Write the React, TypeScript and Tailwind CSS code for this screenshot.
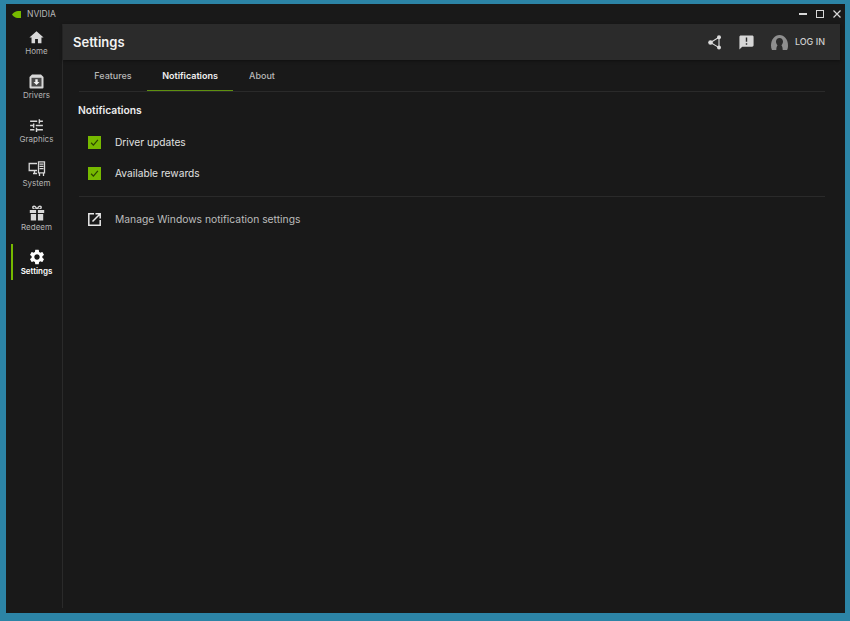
import { MdHome, MdTune, MdSettings, MdAnnouncement } from 'react-icons/md';
import type { ReactNode } from 'react';

const font = { fontFamily: 'Inter, "Noto Sans", sans-serif' };

function DriversIcon() {
  return (
    <svg width="15" height="15" viewBox="0 0 15 15" fill="#d8d8d8">
      <path d="M3 .5h9l2.500 2.500v10.500a1 1 0 0 1-1 1h-12a1 1 0 0 1-1-1V3z" />
      <path d="M2.500 3.800h10v8.700h-10z" fill="#4a4a4a" />
      <path d="M6.300 5.300h2.400v2.600h1.800l-3 3-3-3h1.800z" fill="#f0f0f0" />
    </svg>
  );
}

function SystemIcon() {
  return (
    <svg width="18" height="16" viewBox="0 0 18 16" fill="none" stroke="#d8d8d8" strokeWidth="1.3">
      <path d="M9 9.500H1.200V2.500H9" />
      <path d="M5 12.500h4M6.500 9.500v3" />
      <path d="M10.500 .8h6v11h-6z" fill="#191919" />
      <path d="M11.500 3.200h4M11.500 5.400h4M11.500 7.600h4M11.500 12v3M15.500 12v3" />
    </svg>
  );
}

function RedeemIcon() {
  return (
    <svg width="16" height="16" viewBox="0 0 16 16" fill="#d8d8d8">
      <path
        fillRule="evenodd"
        d="M5 .6c1.400 0 2.400 1 3 2.400.6-1.400 1.600-2.400 3-2.400 1.100 0 1.900.8 1.900 1.700 0 .7-.3 1.200-.7 1.700H3.800c-.4-.5-.7-1-.7-1.700C3.100 1.400 3.900.6 5 .6zm0 1.400c-.6 0-.6.9 0 1.200.6.200 1.400.3 1.800.3C6.400 2.700 5.700 2 5 2zm6 0c-.7 0-1.400.700-1.800 1.500.4 0 1.200-.1 1.800-.3.6-.3.6-1.200 0-1.200z"
      />
      <path d="M.8 5h6.300v3H.8zM8.900 5h6.300v3H8.900zM1.800 9h5.300v6.500H1.800zM8.900 9h5.300v6.500H8.900z" />
    </svg>
  );
}

function ShareIcon() {
  return (
    <svg width="14" height="15" viewBox="0 0 14 15" fill="#dcdcdc" stroke="#dcdcdc">
      <path d="M11 2.200 2.500 7.500 11 12.600z" fill="none" strokeWidth="1.100" />
      <circle cx="11" cy="2.200" r="2" strokeWidth="0" />
      <circle cx="2.500" cy="7.500" r="2.300" strokeWidth="0" />
      <circle cx="11" cy="12.600" r="2" strokeWidth="0" />
    </svg>
  );
}

function AvatarIcon() {
  return (
    <svg width="17" height="15" viewBox="0 0 17 15" fill="#8e8e8e">
      <path d="M1 15C.2 13.500 0 12 0 10.500 0 4.500 3.800 0 8.500 0S17 4.500 17 10.500c0 1.500-.2 3-1 4.500z" />
      <path d="M8.500 3c2.100 0 3.500 1.500 3.500 3.600 0 1.500-.6 2.800-1.600 3.600.8.800 1.300 2.500 1.300 4.800H5.300c0-2.300.5-4 1.300-4.800C5.600 9.400 5 8.100 5 6.600 5 4.500 6.400 3 8.500 3z" fill="#2b2b2b" />
    </svg>
  );
}

function OpenIcon() {
  return (
    <svg width="13" height="13" viewBox="0 0 13 13" fill="none" stroke="#e8e8e8" strokeWidth="1.500">
      <path d="M6 .8H.8v11.400h11.400V7" />
      <path d="M4.500 8.500 11.500 1.500M7.500 .8h4.700v4.700" />
    </svg>
  );
}

function NavItem({ icon, label, active }: { icon: ReactNode; label: string; active?: boolean }) {
  return (
    <div className="relative flex h-11 flex-col items-center pt-[4px] pl-[5px]">
      {active && <div className="absolute top-0 left-[5px] h-9 w-[2px] bg-[#76b900]" />}
      <div className="flex h-[18px] items-center justify-center text-[#d8d8d8]">{icon}</div>
      <span className={`text-[8px] leading-[11px] ${active ? 'font-semibold text-white' : 'text-[#b4b4b4]'}`}>
        {label}
      </span>
    </div>
  );
}

function CheckRow({ label }: { label: string }) {
  return (
    <div className="flex h-[31px] items-center pl-[10px]">
      <div className="-ml-px flex h-[13px] w-[13px] items-center justify-center bg-[#76b900]">
        <svg width="9" height="9" viewBox="0 0 8 8" fill="none" stroke="#2a4400" strokeWidth="1.100">
          <path d="M1 4.200 3 6.300 7 1.600" />
        </svg>
      </div>
      <span className="ml-[14px] text-[10.200px] text-[#e0e0e0]">{label}</span>
    </div>
  );
}

export default function App() {
  return (
    <div className="h-[621px] w-[850px] overflow-hidden bg-[#2c84a6] pt-[4px] pr-[5px] pb-[8px] pl-[6px]" style={font}>
      <div className="flex h-full flex-col bg-[#191919]">
        <div className="flex h-5 shrink-0 items-center pl-[6px] pr-[4px]">
          <svg width="9" height="7" viewBox="0 0 9 7" fill="#76b900">
            <path d="M0 3.500C1.500 1.200 4 0 6 0h3v7H5.500C3.500 7 1.500 5.800 0 3.500z" />
          </svg>
          <span className="ml-[6px] text-[8.500px] text-[#b8b8b8]">NVIDIA</span>
          <div className="ml-auto flex items-center gap-[9px]">
            <div className="h-[2px] w-[8px] bg-[#d8d8d8]" />
            <div className="h-[8px] w-[8px] border-[1.5px] border-[#d8d8d8]" />
            <svg width="8" height="8" viewBox="0 0 8 8" stroke="#d8d8d8" strokeWidth="1.200">
              <path d="M0.500 0.500 7.500 7.500M7.500 0.500 0.500 7.500" />
            </svg>
          </div>
        </div>
        <div className="flex min-h-0 flex-1">
          <nav className="mb-[5px] w-[57px] shrink-0 border-r border-[#2a2a2a]">
            <NavItem icon={<MdHome size={17} />} label="Home" />
            <NavItem icon={<DriversIcon />} label="Drivers" />
            <NavItem icon={<MdTune size={17} />} label="Graphics" />
            <NavItem icon={<SystemIcon />} label="System" />
            <NavItem icon={<RedeemIcon />} label="Redeem" />
            <NavItem icon={<MdSettings size={18} className="text-white" />} label="Settings" active />
          </nav>
          <div className="flex min-w-0 flex-1 flex-col pr-[5px]">
            <header className="flex h-9 shrink-0 items-center bg-[#2b2b2b] pl-[10px] pr-[15px] shadow-[0_1px_3px_rgba(0,0,0,0.4)]">
              <h1 className="pt-[2px] text-[13px] font-semibold text-[#f2f2f2]">Settings</h1>
              <div className="ml-auto flex items-center">
                <ShareIcon />
                <MdAnnouncement size={17} className="ml-[16px] text-[#d6d6d6]" />
                <div className="ml-[16px] pt-[1px]"><AvatarIcon /></div>
                <span className="ml-[7px] text-[9px] font-medium text-[#cfcfcf]">LOG IN</span>
              </div>
            </header>
            <div className="flex-1 pl-[16px] pr-[15px]">
              <div className="flex h-[32px] border-b border-[#2a2a2a] text-[9px] font-medium text-[#b8b8b8]">
                <div className="flex w-[68px] items-center justify-center pt-[1px]">Features</div>
                <div className="flex w-[86px] items-center justify-center border-b border-[#5f9010] pt-[1px] font-semibold text-[#f0f0f0]">
                  Notifications
                </div>
                <div className="flex w-[58px] items-center justify-center pt-[1px]">About</div>
              </div>
              <h2 className="mt-[11px] -ml-px text-[10.300px] leading-[14px] font-semibold text-[#ececec]">Notifications</h2>
              <div className="mt-[10px]">
                <CheckRow label="Driver updates" />
                <CheckRow label="Available rewards" />
              </div>
              <div className="mt-[7px] border-t border-[#2a2a2a]" />
              <div className="flex h-[45px] items-center pl-[9px]">
                <OpenIcon />
                <span className="ml-[14px] text-[10.300px] text-[#bcbcbc]">Manage Windows notification settings</span>
              </div>
            </div>
          </div>
        </div>
      </div>
    </div>
  );
}
